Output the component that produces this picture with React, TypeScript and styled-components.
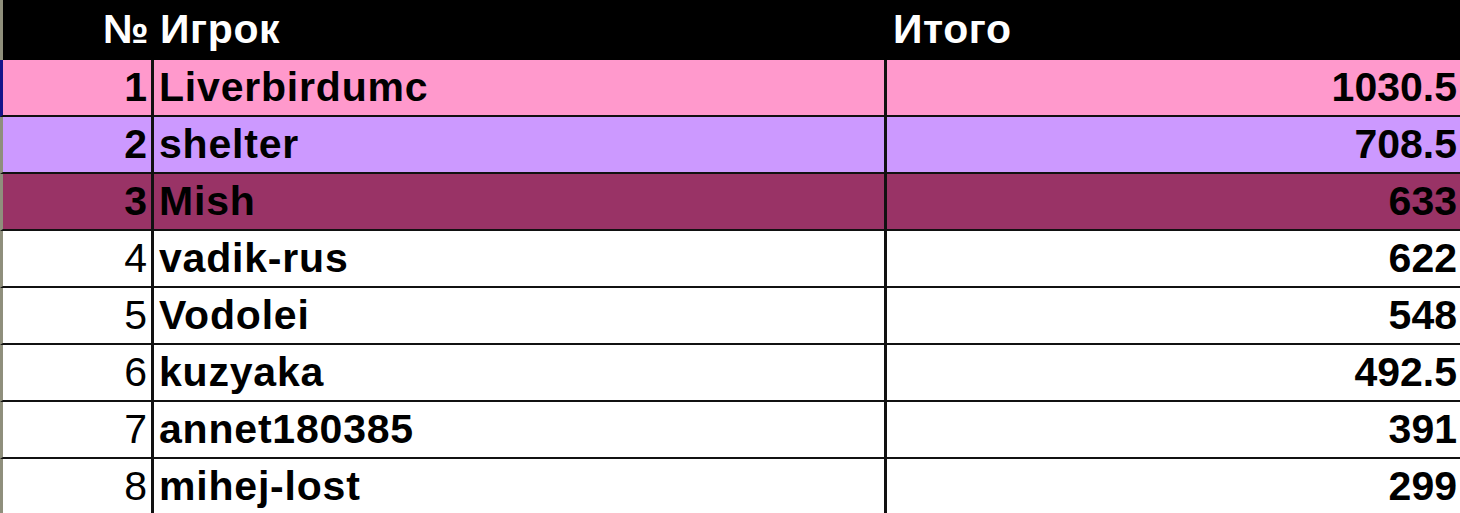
import styled, { createGlobalStyle } from "styled-components";

type Player = {
  rank: number;
  name: string;
  total: string;
};

const players: Player[] = [
  { rank: 1, name: "Liverbirdumc", total: "1030.5" },
  { rank: 2, name: "shelter", total: "708.5" },
  { rank: 3, name: "Mish", total: "633" },
  { rank: 4, name: "vadik-rus", total: "622" },
  { rank: 5, name: "Vodolei", total: "548" },
  { rank: 6, name: "kuzyaka", total: "492.5" },
  { rank: 7, name: "annet180385", total: "391" },
  { rank: 8, name: "mihej-lost", total: "299" },
];

// podium colours, everyone else is plain white
const podium: Record<number, string> = {
  1: "#ff99cc",
  2: "#cc99ff",
  3: "#993366",
};

const App = () => {
  return (
    <>
      <GlobalStyle />
      <Sheet>
        <HeaderRow>
          <HeadCell $align="right">№</HeadCell>
          <HeadCell>Игрок</HeadCell>
          <HeadCell>Итого</HeadCell>
        </HeaderRow>
        {players.map((p) => (
          <Row
            key={p.rank}
            $bg={podium[p.rank] ?? "#ffffff"}
            $selected={p.rank === 1}
          >
            <RankCell $bold={p.rank <= 3}>{p.rank}</RankCell>
            <NameCell>{p.name}</NameCell>
            <TotalCell>{p.total}</TotalCell>
          </Row>
        ))}
      </Sheet>
    </>
  );
};

export default App;

const GlobalStyle = createGlobalStyle`
  html, body {
    margin: 0;
    padding: 0;
    background: #ffffff;
  }
  * {
    box-sizing: border-box;
  }
`;

const Sheet = styled.div`
  width: 1460px;
  height: 513px;
  overflow: hidden;
  font-family: "Liberation Sans", Arial, sans-serif;
  font-size: 41px;
  color: #000;
`;

const HeaderRow = styled.div`
  display: grid;
  grid-template-columns: 154px 733px 1fr;
  height: 60px;
  background: #000;
  border-left: 3px solid #8f8f7c;
`;

const HeadCell = styled.div<{ $align?: "left" | "right" }>`
  display: flex;
  align-items: center;
  justify-content: ${({ $align }) => ($align === "right" ? "flex-end" : "flex-start")};
  padding: 0 ${({ $align }) => ($align === "right" ? "8px" : "0")} 2px 3px;
  color: #fff;
  font-weight: bold;
  letter-spacing: 0.6px;
  white-space: nowrap;
`;

const Row = styled.div<{ $bg: string; $selected: boolean }>`
  display: grid;
  grid-template-columns: 151px 733px 1fr;
  height: 57px;
  background: ${({ $bg }) => $bg};
  border-left: 3px solid ${({ $selected }) => ($selected ? "#14148a" : "#8f8f7c")};
  border-bottom: 2px solid #111;
`;

const Cell = styled.div`
  display: flex;
  align-items: center;
  white-space: nowrap;
  overflow: hidden;
`;

const RankCell = styled(Cell)<{ $bold: boolean }>`
  justify-content: flex-end;
  padding-right: 4px;
  border-right: 3px solid #111;
  font-weight: ${({ $bold }) => ($bold ? "bold" : "normal")};
`;

const NameCell = styled(Cell)`
  padding-left: 5px;
  border-right: 3px solid #111;
  font-weight: bold;
  letter-spacing: 0.8px;
`;

const TotalCell = styled(Cell)`
  justify-content: flex-end;
  padding-right: 3px;
  font-weight: bold;
`;
